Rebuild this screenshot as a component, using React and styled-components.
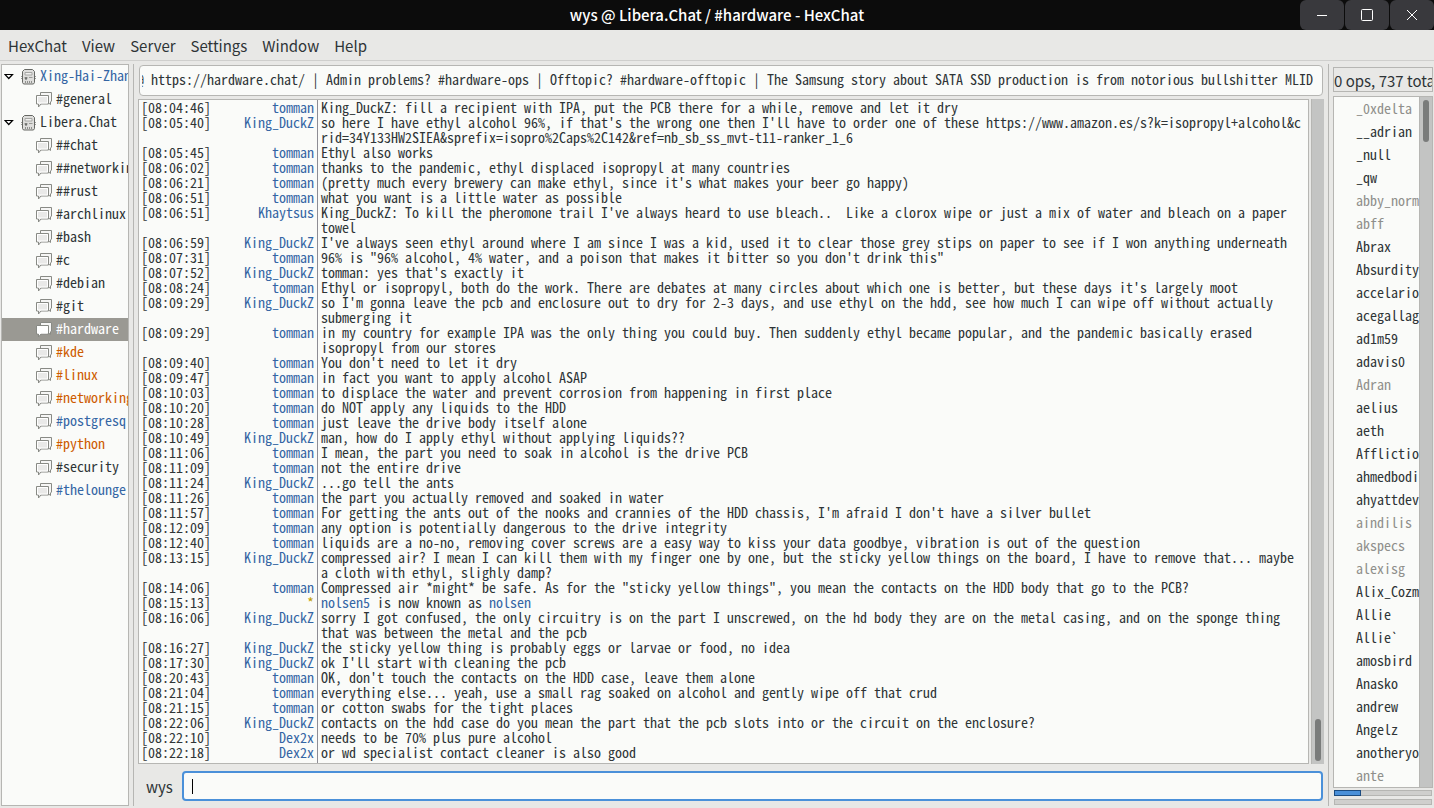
import { useEffect, useRef } from "react"
import styled, { createGlobalStyle } from "styled-components"

const mono = `"Noto Sans Mono CJK SC", "DejaVu Sans Mono", monospace`
const sans = `"Noto Sans CJK SC", sans-serif`

const servers = [
    {
        name: "Xing-Hai-Zhan",
        state: "data",
        channels: [{ name: "#general" }],
    },
    {
        name: "Libera.Chat",
        channels: [
            { name: "##chat" },
            { name: "##networking" },
            { name: "##rust" },
            { name: "#archlinux" },
            { name: "#bash" },
            { name: "#c" },
            { name: "#debian" },
            { name: "#git" },
            { name: "#hardware", state: "selected" },
            { name: "#kde", state: "message" },
            { name: "#linux", state: "message" },
            { name: "#networking", state: "message" },
            { name: "#postgresql", state: "data" },
            { name: "#python", state: "message" },
            { name: "#security" },
            { name: "#thelounge", state: "data" },
        ],
    },
]

const topic = "Hardware chat @ https://hardware.chat/ | Admin problems? #hardware-ops | Offtopic? #hardware-offtopic | The Samsung story about SATA SSD production is from notorious bullshitter MLID"

const messages = [
    ["08:04:46", "tomman", "King_DuckZ: fill a recipient with IPA, put the PCB there for a while, remove and let it dry"],
    ["08:05:40", "King_DuckZ", "so here I have ethyl alcohol 96%, if that's the wrong one then I'll have to order one of these https://www.amazon.es/s?k=isopropyl+alcohol&crid=34Y133HW2SIEA&sprefix=isopro%2Caps%2C142&ref=nb_sb_ss_mvt-t11-ranker_1_6"],
    ["08:05:45", "tomman", "Ethyl also works"],
    ["08:06:02", "tomman", "thanks to the pandemic, ethyl displaced isopropyl at many countries"],
    ["08:06:21", "tomman", "(pretty much every brewery can make ethyl, since it's what makes your beer go happy)"],
    ["08:06:51", "tomman", "what you want is a little water as possible"],
    ["08:06:51", "Khaytsus", "King_DuckZ: To kill the pheromone trail I've always heard to use bleach..  Like a clorox wipe or just a mix of water and bleach on a paper towel"],
    ["08:06:59", "King_DuckZ", "I've always seen ethyl around where I am since I was a kid, used it to clear those grey stips on paper to see if I won anything underneath"],
    ["08:07:31", "tomman", "96% is \"96% alcohol, 4% water, and a poison that makes it bitter so you don't drink this\""],
    ["08:07:52", "King_DuckZ", "tomman: yes that's exactly it"],
    ["08:08:24", "tomman", "Ethyl or isopropyl, both do the work. There are debates at many circles about which one is better, but these days it's largely moot"],
    ["08:09:29", "King_DuckZ", "so I'm gonna leave the pcb and enclosure out to dry for 2-3 days, and use ethyl on the hdd, see how much I can wipe off without actually submerging it"],
    ["08:09:29", "tomman", "in my country for example IPA was the only thing you could buy. Then suddenly ethyl became popular, and the pandemic basically erased isopropyl from our stores"],
    ["08:09:40", "tomman", "You don't need to let it dry"],
    ["08:09:47", "tomman", "in fact you want to apply alcohol ASAP"],
    ["08:10:03", "tomman", "to displace the water and prevent corrosion from happening in first place"],
    ["08:10:20", "tomman", "do NOT apply any liquids to the HDD"],
    ["08:10:28", "tomman", "just leave the drive body itself alone"],
    ["08:10:49", "King_DuckZ", "man, how do I apply ethyl without applying liquids??"],
    ["08:11:06", "tomman", "I mean, the part you need to soak in alcohol is the drive PCB"],
    ["08:11:09", "tomman", "not the entire drive"],
    ["08:11:24", "King_DuckZ", "...go tell the ants"],
    ["08:11:26", "tomman", "the part you actually removed and soaked in water"],
    ["08:11:57", "tomman", "For getting the ants out of the nooks and crannies of the HDD chassis, I'm afraid I don't have a silver bullet"],
    ["08:12:09", "tomman", "any option is potentially dangerous to the drive integrity"],
    ["08:12:40", "tomman", "liquids are a no-no, removing cover screws are a easy way to kiss your data goodbye, vibration is out of the question"],
    ["08:13:15", "King_DuckZ", "compressed air? I mean I can kill them with my finger one by one, but the sticky yellow things on the board, I have to remove that... maybe a cloth with ethyl, slighly damp?"],
    ["08:14:06", "tomman", "Compressed air *might* be safe. As for the \"sticky yellow things\", you mean the contacts on the HDD body that go to the PCB?"],
    ["08:15:13", "*", "nolsen5 is now known as nolsen"],
    ["08:16:06", "King_DuckZ", "sorry I got confused, the only circuitry is on the part I unscrewed, on the hd body they are on the metal casing, and on the sponge thing that was between the metal and the pcb"],
    ["08:16:27", "King_DuckZ", "the sticky yellow thing is probably eggs or larvae or food, no idea"],
    ["08:17:30", "King_DuckZ", "ok I'll start with cleaning the pcb"],
    ["08:20:43", "tomman", "OK, don't touch the contacts on the HDD case, leave them alone"],
    ["08:21:04", "tomman", "everything else... yeah, use a small rag soaked on alcohol and gently wipe off that crud"],
    ["08:21:15", "tomman", "or cotton swabs for the tight places"],
    ["08:22:06", "King_DuckZ", "contacts on the hdd case do you mean the part that the pcb slots into or the circuit on the enclosure?"],
    ["08:22:10", "Dex2x", "needs to be 70% plus pure alcohol"],
    ["08:22:18", "Dex2x", "or wd specialist contact cleaner is also good"],
]

const users = [
    "_0xdelta", "__adrian", "_null", "_qw", "abby_normal", "abff", "Abrax", "Absurdity", "accelario", "acegallagher",
    "ad1m59", "adavis0", "Adran", "aelius", "aeth", "Affliction", "ahmedbodi", "ahyattdev", "aindilis", "akspecs",
    "alexisg", "Alix_Cozmo", "Allie", "Allie`", "amosbird", "Anasko", "andrew", "Angelz", "anotheryou", "ante",
]

const away = ["_0xdelta", "abby_normal", "abff", "Adran", "aindilis", "akspecs", "alexisg", "ante"]

const menus = ["HexChat", "View", "Server", "Settings", "Window", "Help"]

export default function App(){

    const topicRef = useRef(null)

    // keep the end of the topic in view
    useEffect(() => {
        topicRef.current.scrollLeft = topicRef.current.scrollWidth
    }, [])

    return(
        <Page>
            <GlobalStyle/>
            <TitleBar>
                <Title>wys @ Libera.Chat / #hardware - HexChat</Title>
                <WindowButtons>
                    <WindowButton aria-label="Minimize"><MinimizeIcon/></WindowButton>
                    <WindowButton aria-label="Maximize"><MaximizeIcon/></WindowButton>
                    <WindowButton aria-label="Close"><CloseIcon/></WindowButton>
                </WindowButtons>
            </TitleBar>
            <MenuBar>
                {menus.map(menu => <MenuButton key={menu}>{menu}</MenuButton>)}
            </MenuBar>
            <Main>
                <Tree>
                    {servers.map(server => (
                        <div key={server.name}>
                            <ServerRow $state={server.state}>
                                <ArrowIcon/>
                                <ServerIcon/>
                                <RowName>{server.name}</RowName>
                            </ServerRow>
                            {server.channels.map(channel => (
                                <ChannelRow key={channel.name} $state={channel.state}>
                                    <ChannelIcon selected={channel.state === "selected"}/>
                                    <RowName>{channel.name}</RowName>
                                </ChannelRow>
                            ))}
                        </div>
                    ))}
                </Tree>
                <Chat>
                    <Topic ref={topicRef} aria-label="Topic" defaultValue={topic}/>
                    <LogArea>
                        <Log>
                            {messages.map(([time, nick, text]) => (
                                <Message key={time + text}>
                                    <Time>[{time}]</Time>
                                    <Nick $event={nick === "*"}>{nick}</Nick>
                                    <Text><MessageText nick={nick} text={text}/></Text>
                                </Message>
                            ))}
                            <Filler/>
                        </Log>
                        <Scrollbar $end><Thumb/></Scrollbar>
                    </LogArea>
                    <InputRow>
                        <label htmlFor="message">wys</label>
                        <MessageBox>
                            <Caret/>
                            <MessageInput id="message"/>
                        </MessageBox>
                    </InputRow>
                </Chat>
                <Side>
                    <UserCount>0 ops, 737 total</UserCount>
                    <UserArea>
                        <UserList>
                            {users.map(user => <User key={user} $away={away.includes(user)}>{user}</User>)}
                        </UserList>
                        <UserScrollbar><Thumb/></UserScrollbar>
                    </UserArea>
                    <Meters>
                        <Meter><MeterFill style={{ width: "28%" }}/></Meter>
                        <Meter/>
                    </Meters>
                </Side>
            </Main>
        </Page>
    )
}

function MessageText({ nick, text }){
    if (nick === "*") {
        const [from, to] = text.split(" is now known as ")
        return <><Name>{from}</Name> is now known as <Name>{to}</Name></>
    }
    return text.split(/(https?:\S+)/).map((part, i) => i % 2 ? <Url key={i}>{part}</Url> : part)
}

function MinimizeIcon(){
    return(
        <svg width="16" height="16" viewBox="0 0 16 16">
            <path d="M3 8.5h10" stroke="#fff"/>
        </svg>
    )
}

function MaximizeIcon(){
    return(
        <svg width="16" height="16" viewBox="0 0 16 16">
            <rect x="2.5" y="2.5" width="11" height="11" rx="1" fill="none" stroke="#fff"/>
        </svg>
    )
}

function CloseIcon(){
    return(
        <svg width="16" height="16" viewBox="0 0 16 16">
            <path d="M3 3l10 10M13 3L3 13" stroke="#fff"/>
        </svg>
    )
}

function ArrowIcon(){
    return(
        <svg width="10" height="10" viewBox="0 0 10 10">
            <path d="M1 2.5h7.500L4.750 6.500z" fill="#fff" stroke="#000" strokeWidth="1.200"/>
        </svg>
    )
}

function ServerIcon(){
    return(
        <svg width="16" height="16" viewBox="0 0 16 16">
            <path d="M1 7.500h2M1 9.500h2M14 7.500h2M14 9.500h2" stroke="#9c9d9a"/>
            <path d="M4.500.500h8l2 2v11l-1 1.500h-10l-1-1.500v-11z" fill="#dededc" stroke="#666864"/>
            <path d="M5 3.500h7v2.500h-7z" fill="#f1f1f0" stroke="#a6a7a4"/>
            <path d="M4.500 8.500h3M9 8.500h3.500" stroke="#989996"/>
            <circle cx="6" cy="9.500" r="1.200" fill="#6f716d"/>
            <path d="M5.500 12v2M7.500 12v2M9.500 12v2M11.500 12v2" stroke="#8f908d"/>
        </svg>
    )
}

function ChannelIcon({ selected }){
    return(
        <svg width="16" height="16" viewBox="0 0 16 16">
            <path d="M4.500.500h11v8.500l-1 1v2.500l-2.500-2h-7.500z" fill="#f6f6f5" stroke="#888a85"/>
            <path d="M.500 3.500h12v8.500h-7.500l-2.500 3v-3h-2z" fill={selected ? "#ffffff" : "#e9e9e8"} stroke="#888a85"/>
            <path d="M1.500 11v-6.500h10v6.500z" fill="none" stroke="#fff"/>
        </svg>
    )
}

const GlobalStyle = createGlobalStyle`
    * {
        box-sizing: border-box;
    }

    body {
        margin: 0;
        overflow: hidden;
        background-color: #e8e8e6;
        color: #2e3436;
    }

    button, input {
        margin: 0;
        border: none;
        font: inherit;
        color: inherit;
        outline: none;
    }
`

const Page = styled.div`
    display: flex;
    flex-direction: column;
    height: 100vh;
    font-family: ${sans};
    font-size: 15px;
`

const TitleBar = styled.header`
    display: grid;
    grid-template-columns: 1fr auto 1fr;
    height: 30px;
    background-color: #0c0c0c;
    color: #ffffff;
`

const Title = styled.h1`
    grid-column: 2;
    margin: 0;
    font-size: 15px;
    font-weight: 500;
    line-height: 30px;
`

const WindowButtons = styled.div`
    display: flex;
    justify-content: flex-end;
    gap: 1px;
`

const WindowButton = styled.button`
    display: flex;
    align-items: center;
    justify-content: center;
    width: 44px;
    padding: 0;
    border-radius: 6px;
    background-color: #39393d;
`

const MenuBar = styled.nav`
    display: flex;
    gap: 1px;
    height: 31px;
    padding-left: 1px;
    border-bottom: 1px solid #cfcfcd;
`

const MenuButton = styled.button`
    padding: 2px 7px 0;
    background: none;
    line-height: 28px;
`

const Main = styled.main`
    display: grid;
    grid-template-columns: 133px minmax(0, 1fr) 105px;
    grid-template-rows: minmax(0, 1fr);
    flex: 1;
    min-height: 0;
    padding: 3px 0 2px;
`

const Tree = styled.nav`
    margin: 0 4px 0 1px;
    border: 1px solid #b6b6b3;
    background-color: #fafbf9;
    overflow: hidden;
    font-family: ${mono};
    font-size: 14px;
    line-height: 15px;
`

const stateColors = {
    data: "#3465a4",
    message: "#ce5c00",
    selected: "#ffffff",
}

const TreeRow = styled.div`
    display: flex;
    align-items: center;
    gap: 4px;
    height: 23px;
    color: ${props => stateColors[props.$state] || "#2e3436"};
    background-color: ${props => props.$state === "selected" ? "#9a9993" : "transparent"};
    white-space: nowrap;

    svg {
        flex: none;
    }
`

const ServerRow = styled(TreeRow)`
    padding-left: 2px;

    svg:first-child {
        margin-right: 2px;
    }
`

const ChannelRow = styled(TreeRow)`
    padding-left: 34px;
`

const RowName = styled.span`
    padding-bottom: 2px;
`

const Chat = styled.section`
    display: flex;
    flex-direction: column;
    padding: 1px 4px 0;
    border: solid #b6b6b3;
    border-width: 0 1px;
`

const Topic = styled.input`
    height: 31px;
    margin: 0 1px 3px;
    padding: 0 9px 4px 2px;
    border: 1px solid #b6b6b3;
    border-radius: 4px;
    background-color: #fafbf9;
    font-family: ${mono};
    font-size: 14px;
`

const LogArea = styled.div`
    display: flex;
    flex: 1;
    min-height: 0;
    gap: 2px;
`

const Log = styled.div`
    display: flex;
    flex-direction: column;
    flex: 1;
    min-width: 0;
    border: 1px solid #b6b6b3;
    background-color: #fafbf9;
    overflow: hidden;
    font-family: ${mono};
    font-size: 14px;
    line-height: 15px;
`

const Message = styled.div`
    display: grid;
    flex: none;
    grid-template-columns: 75px 103px minmax(0, 1fr);
`

const Time = styled.time`
    padding-left: 2px;
`

const Nick = styled.span`
    padding-right: 3px;
    color: ${props => props.$event ? "#c4a000" : "#3465a4"};
    text-align: right;
`

const Text = styled.span`
    padding: 0 2px 0 3px;
    border-left: 1px solid #8d8d95;
    white-space: pre-wrap;
`

const Url = styled.span`
    word-break: break-all;
`

const Name = styled.span`
    color: #3465a4;
`

const Filler = styled.div`
    flex: 1;
    margin-left: 178px;
    border-left: 1px solid #8d8d95;
`

const Scrollbar = styled.div`
    display: flex;
    flex: none;
    align-items: ${props => props.$end ? "flex-end" : "flex-start"};
    width: 13px;
    padding: 3px;
    border-left: 1px solid #b6b6b3;
    background-color: #c3c4c3;
`

const Thumb = styled.div`
    width: 6px;
    height: 42px;
    border-radius: 3px;
    background-color: #7a7c7b;
`

const InputRow = styled.div`
    display: flex;
    align-items: center;
    gap: 9px;
    padding: 7px 1px 5px 8px;
`

const MessageBox = styled.div`
    display: flex;
    align-items: center;
    flex: 1;
    height: 30px;
    padding: 0 8px;
    border: 2px solid #4a90d9;
    border-radius: 4px;
    background-color: #fafbf9;
`

const Caret = styled.div`
    width: 1px;
    height: 15px;
    background-color: #000000;
`

const MessageInput = styled.input`
    flex: 1;
    background: none;
    font-family: ${mono};
    font-size: 14px;
    caret-color: transparent;
`

const Side = styled.aside`
    display: flex;
    flex-direction: column;
    min-width: 0;
    padding: 3px 1px 0 4px;
`

const UserCount = styled.div`
    flex: none;
    height: 25px;
    margin-bottom: 4px;
    border: 1px solid #b6b6b3;
    overflow: hidden;
    line-height: 25px;
    white-space: nowrap;
`

const UserArea = styled.div`
    display: flex;
    flex: 1;
    min-height: 0;
    border: 1px solid #b6b6b3;
    background-color: #fafbf9;
`

const UserList = styled.ul`
    flex: 1;
    min-width: 0;
    margin: 0;
    padding: 0 0 0 22px;
    overflow: hidden;
    font-family: ${mono};
    font-size: 14px;
    list-style: none;
`

const User = styled.li`
    color: ${props => props.$away ? "#8f8f8b" : "#2e3436"};
    line-height: 23px;
    white-space: nowrap;
`

const UserScrollbar = styled(Scrollbar)`
    width: 13px;
`

const Meters = styled.div`
    display: grid;
    gap: 3px;
    padding: 2px 1px 1px;
`

const Meter = styled.div`
    height: 6px;
    border: 1px solid #b6b6b3;
    background-color: #cfcfcd;
`

const MeterFill = styled.div`
    height: 6px;
    margin: -1px;
    border: 1px solid #1c4c80;
    background-color: #4a90d9;
`
